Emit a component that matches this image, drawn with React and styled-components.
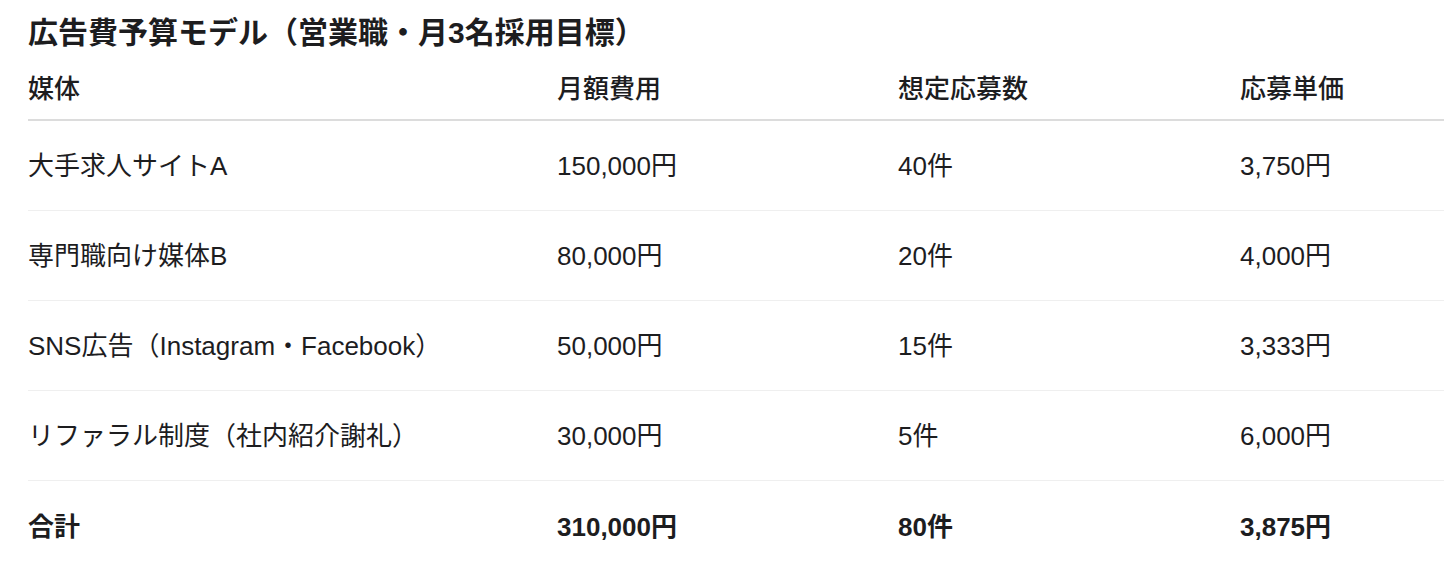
import React from 'react';
import styled, { createGlobalStyle } from 'styled-components';

const GlobalStyle = createGlobalStyle`
    body {
        margin: 0;
        background: #fff;
        font-family: "Liberation Sans", "Noto Sans CJK JP", sans-serif;
        color: #1d1d1f;
    }
`;

const Page = styled.div`
    padding: 11px 0 0 28px;
`;

const Title = styled.h2`
    margin: 0;
    font-size: 30px;
    font-weight: 600;
    line-height: 43px;
`;

const Row = styled.div`
    display: grid;
    grid-template-columns: 529px 341px 342px 1fr;
    align-items: center;
    box-sizing: border-box;
    height: ${(p) => (p.$head ? '67px' : '90px')};
    padding-bottom: ${(p) => (p.$head ? '0' : '4px')};
    border-bottom: ${(p) => (p.$head ? '2px solid #dcdcdc' : p.$last ? 'none' : '1px solid #efefef')};
`;

const Cell = styled.div`
    font-size: 26px;
    font-weight: ${(p) => (p.$bold ? 700 : p.$head ? 500 : 400)};
    white-space: nowrap;
`;

const rows = [
    ['大手求人サイトA', '150,000円', '40件', '3,750円'],
    ['専門職向け媒体B', '80,000円', '20件', '4,000円'],
    ['SNS広告（Instagram・Facebook）', '50,000円', '15件', '3,333円'],
    ['リファラル制度（社内紹介謝礼）', '30,000円', '5件', '6,000円'],
];

const total = ['合計', '310,000円', '80件', '3,875円'];

const App = () => {
    return (
        <Page>
            <GlobalStyle />
            <Title>広告費予算モデル（営業職・月3名採用目標）</Title>
            <Row $head>
                {['媒体', '月額費用', '想定応募数', '応募単価'].map((h) => (
                    <Cell key={h} $head>{h}</Cell>
                ))}
            </Row>
            {rows.map((r) => (
                <Row key={r[0]}>
                    {r.map((c, i) => <Cell key={i}>{c}</Cell>)}
                </Row>
            ))}
            <Row $last>
                {total.map((c, i) => <Cell key={i} $bold>{c}</Cell>)}
            </Row>
        </Page>
    );
};

export default App;
